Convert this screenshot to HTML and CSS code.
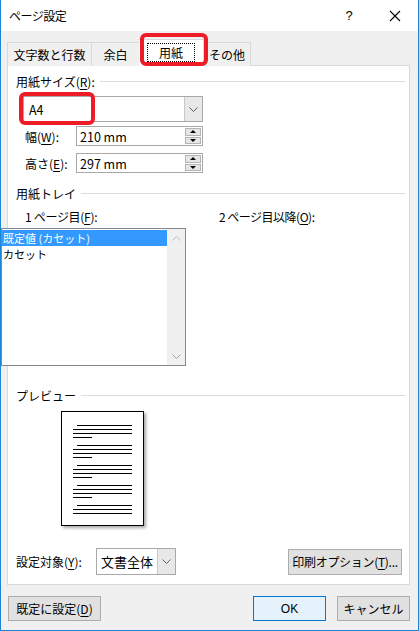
FILE: index.html
```html
<!DOCTYPE html>
<html lang="ja">

<head>
    <meta charset="UTF-8">
    <title>ページ設定</title>
    <link rel="stylesheet" href="styles.css">
</head>

<body>
    <div class="window">
        <!-- Title bar -->
        <div class="titlebar">
            <span class="title">ページ設定</span>
            <span class="help">?</span>
            <span class="close">
                <svg width="12" height="12" viewBox="0 0 12 12"><path d="M1 1L11 11M11 1L1 11" stroke="#000" stroke-width="1.1" fill="none"/></svg>
            </span>
        </div>

        <div class="body">
            <!-- Tabs -->
            <div class="tabs">
                <div class="tab tab-wide">文字数と行数</div>
                <div class="tab tab-small">余白</div>
                <div class="tab tab-active"><span class="focus">用紙</span></div>
                <div class="tab tab-other">その他</div>
                <div class="mark mark-tab"></div>
            </div>

            <!-- Tab panel -->
            <div class="panel">
                <div class="group"><span>用紙サイズ(<u>R</u>):</span><i></i></div>

                <div class="combo combo-size">
                    <span class="combo-text">A4</span>
                    <span class="combo-btn">
                        <svg width="9" height="5" viewBox="0 0 9 5"><path d="M0.5 0.5L4.5 4.5L8.5 0.5" stroke="#606060" fill="none"/></svg>
                    </span>
                    <div class="mark mark-size"></div>
                </div>

                <div class="field">
                    <label>幅(<u>W</u>):</label>
                    <div class="spin">
                        <span class="spin-text">210 mm</span>
                        <span class="spin-btns">
                            <span class="spin-btn"><b class="up"></b></span>
                            <span class="spin-btn"><b class="down"></b></span>
                        </span>
                    </div>
                </div>

                <div class="field field-2">
                    <label>高さ(<u>E</u>):</label>
                    <div class="spin">
                        <span class="spin-text">297 mm</span>
                        <span class="spin-btns">
                            <span class="spin-btn"><b class="up"></b></span>
                            <span class="spin-btn"><b class="down"></b></span>
                        </span>
                    </div>
                </div>

                <div class="group group-tray"><span>用紙トレイ</span><i></i></div>

                <div class="tray-labels">
                    <span class="tray-first">1 ページ目(<u>F</u>):</span>
                    <span class="tray-next">2 ページ目以降(<u>O</u>):</span>
                </div>

                <div class="listbox">
                    <div class="list-items">
                        <div class="item selected">既定値 (カセット)</div>
                        <div class="item">カセット</div>
                    </div>
                    <div class="scrollbar">
                        <svg width="9" height="5" viewBox="0 0 9 5"><path d="M0.5 4.5L4.5 0.5L8.5 4.5" stroke="#c0c0c0" fill="none"/></svg>
                        <svg width="9" height="5" viewBox="0 0 9 5"><path d="M0.5 0.5L4.5 4.5L8.5 0.5" stroke="#a0a0a0" fill="none"/></svg>
                    </div>
                </div>

                <div class="group group-preview"><span>プレビュー</span><i></i></div>

                <div class="page">
                    <div class="para"><i class="indent"></i><i></i><i></i><i class="short"></i></div>
                    <div class="para"><i class="indent"></i><i></i><i></i><i class="short"></i></div>
                    <div class="para"><i class="indent"></i><i></i><i></i><i class="short"></i></div>
                    <div class="para"><i class="indent"></i><i></i><i></i><i class="short"></i></div>
                    <div class="para"><i class="indent"></i><i></i><i></i></div>
                </div>

                <div class="apply-row">
                    <label>設定対象(<u>Y</u>):</label>
                    <div class="combo combo-apply">
                        <span class="combo-text">文書全体</span>
                        <span class="combo-btn">
                            <svg width="9" height="5" viewBox="0 0 9 5"><path d="M0.5 0.5L4.5 4.5L8.5 0.5" stroke="#606060" fill="none"/></svg>
                        </span>
                    </div>
                    <button class="btn btn-print">印刷オプション(<u>T</u>)...</button>
                </div>
            </div>

            <!-- Dialog buttons -->
            <div class="footer">
                <button class="btn btn-default">既定に設定(<u>D</u>)</button>
                <button class="btn btn-ok">OK</button>
                <button class="btn btn-cancel">キャンセル</button>
            </div>
        </div>
    </div>
</body>

</html>
```

FILE: styles.css
```css
body {
    margin: 0;
    padding: 0;
    font-family: "Noto Sans CJK JP", "Noto Sans", sans-serif;
    font-size: 12px;
    color: #000;
    background-color: #fff;
}

u {
    text-decoration-thickness: 1px;
    text-underline-offset: 2px;
}

.window {
    width: 419px;
    height: 631px;
    box-sizing: border-box;
    border: 1px solid #1b85d8;
    border-top: none;
    display: flex;
    flex-direction: column;
}

/* Title bar */
.titlebar {
    height: 31px;
    flex-shrink: 0;
    background-color: #fff;
    display: flex;
    align-items: center;
    padding-left: 8px;
}

.title {
    flex: 1;
    letter-spacing: -0.5px;
}

.help {
    width: 46px;
    text-align: center;
    font-family: "Liberation Sans", sans-serif;
    font-size: 13px;
}

.close {
    width: 46px;
    display: flex;
    justify-content: center;
}

/* Body */
.body {
    flex: 1;
    background-color: #f0f0f0;
    padding: 0 8px 0 6px;
}

.tabs {
    position: relative;
    display: flex;
    align-items: flex-end;
    height: 27px;
    margin-top: 8px;
    margin-bottom: -1px;
}

.tab {
    height: 24px;
    box-sizing: border-box;
    border: 1px solid #d9d9d9;
    border-bottom: none;
    background-color: #f0f0f0;
    display: flex;
    align-items: center;
    justify-content: center;
    font-size: 12px;
}

.tab + .tab {
    border-left: none;
}

.tab-wide {
    width: 85px;
}

.tab-small {
    width: 48px;
}

.tab-active {
    width: 65px;
    height: 27px;
    background-color: #fff;
    border-left: 1px solid #d9d9d9;
    margin-left: -1px;
    position: relative;
    z-index: 1;
}

.tab-active + .tab {
    border-left: none;
}

.tab-other {
    width: 47px;
}

.focus {
    display: block;
    width: 48px;
    height: 19px;
    line-height: 18px;
    text-align: center;
    box-sizing: border-box;
    border: 1px dotted #000;
    margin-top: -2px;
}

/* red annotation boxes */
.mark {
    position: absolute;
    border: 4px solid #ee1c24;
    border-radius: 6px;
    z-index: 2;
    box-sizing: border-box;
}

.mark-tab {
    left: 133px;
    top: -6px;
    width: 68px;
    height: 33px;
}

.mark-size {
    left: -5px;
    top: -5px;
    width: 76px;
    height: 33px;
}

/* Panel */
.panel {
    width: 403px;
    height: 520px;
    box-sizing: border-box;
    background-color: #fff;
    border: 1px solid #d9d9d9;
    padding: 0 4px 0 8px;
}

.group {
    display: flex;
    align-items: center;
    height: 15px;
    margin-top: 8px;
}

.group i {
    flex: 1;
    height: 1px;
    background-color: #dcdcdc;
    margin-left: 5px;
}

.group-tray {
    margin-top: 13px;
}

.group-preview {
    margin-top: 22px;
}

.combo {
    position: relative;
    display: flex;
    box-sizing: border-box;
    border: 1px solid #a8a8a8;
    background-color: #fff;
}

.combo-size {
    width: 180px;
    height: 26px;
    margin: 7px 0 0 7px;
}

.combo-text {
    flex: 1;
    display: flex;
    align-items: center;
    padding-left: 5px;
    font-size: 12.5px;
}

.combo-btn {
    width: 17px;
    background-color: #e8e8e8;
    border-left: 1px solid #c8c8c8;
    display: flex;
    align-items: center;
    justify-content: center;
}

.field {
    display: flex;
    align-items: center;
    height: 20px;
    margin-top: 4px;
}

.field-2 {
    margin-top: 7px;
}

.field label {
    width: 51px;
    padding-left: 9px;
}

.spin {
    display: flex;
    width: 127px;
    height: 20px;
    box-sizing: border-box;
    border: 1px solid #a8a8a8;
}

.spin-text {
    flex: 1;
    display: flex;
    align-items: center;
    padding-left: 3px;
    font-size: 12.5px;
}

.spin-btns {
    width: 16px;
    display: flex;
    flex-direction: column;
    padding: 1px;
    gap: 1px;
}

.spin-btn {
    flex: 1;
    background-color: #e6e6e6;
    border: 1px solid #b4b4b4;
    display: flex;
    align-items: center;
    justify-content: center;
}

.spin-btn b {
    width: 0;
    height: 0;
    border-left: 3px solid transparent;
    border-right: 3px solid transparent;
}

.spin-btn .up {
    border-bottom: 3px solid #000;
}

.spin-btn .down {
    border-top: 3px solid #000;
}

.tray-labels {
    display: flex;
    height: 15px;
    margin-top: 7px;
}

.tray-first {
    width: 194px;
    padding-left: 9px;
    letter-spacing: -0.3px;
}

.tray-next {
    letter-spacing: -0.5px;
}

/* Listbox */
.listbox {
    display: flex;
    width: 185px;
    height: 138px;
    box-sizing: border-box;
    margin: 5px 0 0 -15px;
    border: 1px solid #828790;
    background-color: #fff;
    position: relative;
}

.list-items {
    flex: 1;
    padding-top: 1px;
}

.item {
    height: 16px;
    line-height: 16px;
    padding-left: 1px;
    font-size: 11px;
    overflow: hidden;
}

.item.selected {
    background-color: #3399ff;
    color: #fff;
}

.scrollbar {
    width: 18px;
    background-color: #f0f0f0;
    display: flex;
    flex-direction: column;
    justify-content: space-between;
    align-items: center;
    padding: 7px 0 6px;
}

/* Preview */
.page {
    width: 83px;
    height: 115px;
    box-sizing: border-box;
    margin: 8px 0 0 45px;
    border: 1px solid #000;
    background-color: #fff;
    box-shadow: 2px 2px 3px rgba(0, 0, 0, 0.35);
    padding: 13px 11px 0;
}

.para {
    height: 20px;
}

.para i {
    display: block;
    height: 1px;
    background-color: #000;
    margin-bottom: 3px;
}

.para .indent {
    margin-left: 4px;
}

.para .short {
    width: 19px;
}

/* Apply row */
.apply-row {
    display: flex;
    align-items: center;
    margin-top: 22px;
    padding-right: 3px;
}

.apply-row label {
    width: 80px;
}

.combo-apply {
    width: 80px;
    height: 27px;
}

.combo-apply .combo-text {
    font-size: 13px;
    padding-left: 4px;
}

.combo-apply .combo-btn {
    width: 17px;
}

.btn {
    font-family: "Noto Sans CJK JP", "Noto Sans", sans-serif;
    font-size: 12px;
    color: #000;
    height: 26px;
    box-sizing: border-box;
    border: 1px solid #adadad;
    background-color: #e1e1e1;
    padding: 0;
}

.btn-print {
    width: 114px;
    margin-left: auto;
    letter-spacing: -0.3px;
}

/* Footer */
.footer {
    display: flex;
    margin-top: 11px;
    padding-left: 1px;
}

.footer .btn {
    height: 25px;
}

.btn-default {
    width: 93px;
}

.btn-ok {
    width: 73px;
    margin-left: auto;
    background-color: #e5f1fb;
    border-color: #0078d7;
    font-family: "Liberation Sans", sans-serif;
}

.btn-cancel {
    width: 73px;
    margin-left: 11px;
}
```
